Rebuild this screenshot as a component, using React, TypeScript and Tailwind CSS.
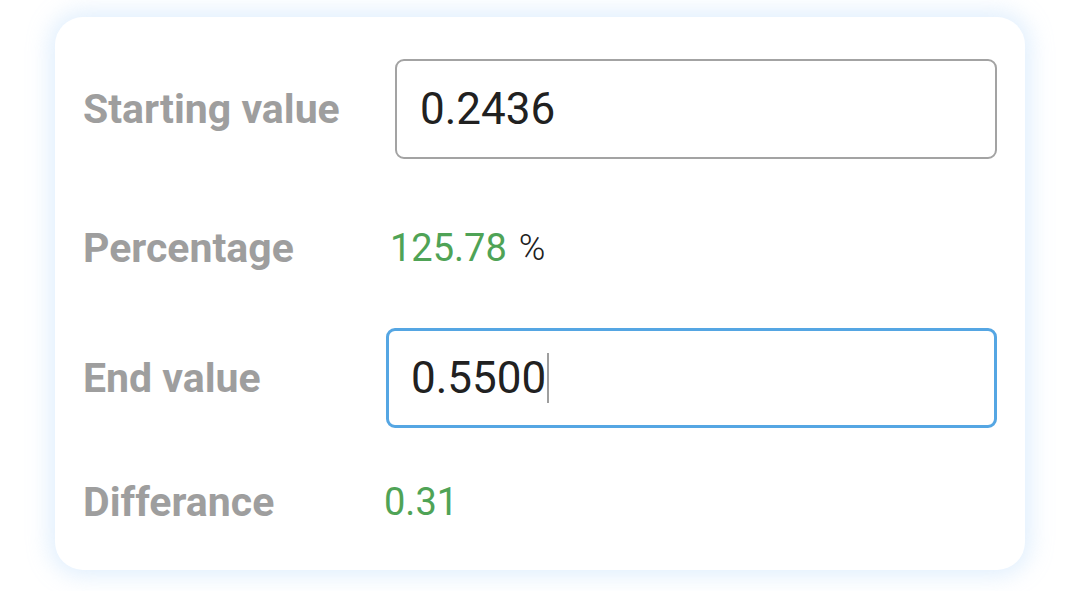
import React from 'react';

const font = { fontFamily: 'Roboto, "Noto Sans", sans-serif' };

function Label({ children }: { children: React.ReactNode }) {
  return <span className="font-bold text-[41px] text-[#9e9e9e] leading-none">{children}</span>;
}

export default function App() {
  return (
    <div className="w-[1080px] h-[591px] bg-white pt-[17px] pl-[55px]" style={font}>
      <div className="w-[970px] h-[553px] bg-white rounded-[28px] shadow-[0_0_22px_6px_rgba(170,210,250,0.35)] pl-[28px] pr-[28px] pt-[42px]">
        {/* Starting value */}
        <div className="flex items-center h-[100px]">
          <div className="w-[312px]">
            <Label>Starting value</Label>
          </div>
          <div className="flex-1 h-[100px] border-2 border-[#a3a3a3] rounded-[9px] flex items-center pl-[23px]">
            <span className="text-[44px] text-[#212121] leading-none">0.2436</span>
          </div>
        </div>

        {/* Percentage */}
        <div className="flex items-center h-[60px] mt-[59px]">
          <div className="w-[307px]">
            <Label>Percentage</Label>
          </div>
          <span className="text-[38px] text-[#4fa356] leading-none">125.78</span>
          <span className="text-[36px] font-light text-[#212121] leading-none ml-[12px]">%</span>
        </div>

        {/* End value */}
        <div className="flex items-center h-[100px] mt-[50px]">
          <div className="w-[303px]">
            <Label>End value</Label>
          </div>
          <div className="flex-1 h-[100px] border-[3px] border-[#55a6e3] rounded-[9px] flex items-center pl-[22px]">
            <span className="text-[44px] text-[#212121] leading-none">0.5500</span>
            <span className="w-[2px] h-[50px] bg-[#9e9e9e] ml-[1px]" />
          </div>
        </div>

        {/* Differance */}
        <div className="flex items-center h-[60px] mt-[44px]">
          <div className="w-[301px]">
            <Label>Differance</Label>
          </div>
          <span className="text-[38px] text-[#4fa356] leading-none">0.31</span>
        </div>
      </div>
    </div>
  );
}
